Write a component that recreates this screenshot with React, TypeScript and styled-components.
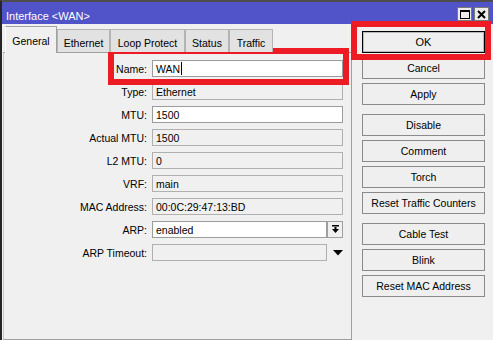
import { Fragment } from "react";
import styled, { createGlobalStyle } from "styled-components";

const Global = createGlobalStyle`
  html, body {
    margin: 0;
    padding: 0;
    background: #f0f0f0;
    overflow: hidden;
  }
  body {
    font-family: "Liberation Sans", Arial, sans-serif;
    font-size: 10.5px;
    color: #000;
  }
`;

const Shell = styled.div`
  position: relative;
  width: 493px;
  height: 340px;
  overflow: hidden;
`;

const Window = styled.div`
  width: 493px;
  height: 340px;
  box-sizing: border-box;
  border-top: 2px solid #4d4d4d;
  border-left: 2px solid #262626;
  background: #f0f0f0;
  display: flex;
  flex-direction: column;
`;

const TitleBar = styled.div`
  height: 22px;
  flex: 0 0 22px;
  background: #5153c9;
  display: flex;
  align-items: flex-start;
  padding: 0 4px;
  color: #fff;
`;

const Title = styled.div`
  font-size: 11px;
  line-height: 13px;
  margin-top: 8px;
  flex: 1;
`;

const TitleButtons = styled.div`
  display: flex;
  gap: 2px;
  margin-top: 5px;
`;

const TitleButton = styled.div`
  width: 15px;
  height: 14px;
  box-sizing: border-box;
  background: #ececec;
  border: 1px solid #7a7a7a;
  display: flex;
  align-items: center;
  justify-content: center;
`;

const Body = styled.div`
  flex: 1;
  display: flex;
  min-height: 0;
`;

const LeftPane = styled.div`
  width: 350px;
  flex: 0 0 350px;
  box-sizing: border-box;
  padding: 2px 0 0 1px;
  display: flex;
  flex-direction: column;
`;

const TabStrip = styled.div`
  position: relative;
  z-index: 1;
  height: 27px;
  margin-bottom: -1px;
  padding-left: 2px;
  display: flex;
  align-items: flex-end;
`;

const Tab = styled.div<{ $active?: boolean; $w: number }>`
  width: ${(p) => p.$w}px;
  box-sizing: border-box;
  height: ${(p) => (p.$active ? 27 : 23)}px;
  margin-bottom: ${(p) => (p.$active ? 0 : 1)}px;
  padding-top: ${(p) => (p.$active ? 8 : 7)}px;
  background: ${(p) => (p.$active ? "#f0f0f0" : "#e2e2e2")};
  border: 1px solid ${(p) => (p.$active ? "#a0a0a0" : "#b4b4b4")};
  border-bottom: none;
  border-left-color: ${(p) => (p.$active ? "#ffffff" : "#b4b4b4")};
  display: flex;
  justify-content: center;
  line-height: 12px;
  white-space: nowrap;
`;

const Panel = styled.div`
  flex: 1;
  box-sizing: border-box;
  border: 1px solid #a0a0a0;
  border-left-color: #c8c8c8;
  background: #f0f0f0;
  padding: 7px 0 0 0;
`;

const Form = styled.div`
  display: grid;
  grid-template-columns: 143px 191px;
  grid-auto-rows: 17px;
  column-gap: 5px;
  row-gap: 6px;
`;

const Label = styled.div`
  text-align: right;
  align-self: center;
  white-space: nowrap;
  line-height: 12px;
`;

const Field = styled.div<{ $editable?: boolean; $w?: number }>`
  box-sizing: border-box;
  height: 17px;
  width: ${(p) => (p.$w ? `${p.$w}px` : "100%")};
  flex: 0 0 auto;
  border: 1px solid ${(p) => (p.$editable ? "#9c9c9c" : "#b0b0b0")};
  background: ${(p) => (p.$editable ? "#ffffff" : "#f0f0f0")};
  padding-left: 3px;
  display: flex;
  align-items: center;
  line-height: 12px;
  white-space: nowrap;
`;

const Caret = styled.span`
  display: inline-block;
  width: 1px;
  height: 13px;
  background: #000;
  margin-left: 1px;
`;

const FieldGroup = styled.div`
  display: flex;
  align-items: center;
`;

const DropButton = styled.div`
  width: 16px;
  height: 17px;
  box-sizing: border-box;
  border: 1px solid #a0a0a0;
  background: #f0f0f0;
  display: flex;
  align-items: center;
  justify-content: center;
`;

const DropArrow = styled.div`
  width: 16px;
  height: 17px;
  display: flex;
  align-items: center;
  justify-content: center;
  padding-left: 6px;
  box-sizing: border-box;
`;

const RightPane = styled.div`
  flex: 1;
  padding: 7px 0 0 10px;
  display: flex;
  flex-direction: column;
  gap: 4px;
`;

const Button = styled.div<{ $default?: boolean; $spaced?: boolean }>`
  width: 123px;
  height: 22px;
  box-sizing: border-box;
  margin-top: ${(p) => (p.$spaced ? 5 : 0)}px;
  border: 1px solid ${(p) => (p.$default ? "#000000" : "#8a8a8a")};
  box-shadow: ${(p) => (p.$default ? "inset 0 0 0 1px #b9b9b9" : "none")};
  background: #efefef;
  display: flex;
  align-items: center;
  justify-content: center;
  font-size: ${(p) => (p.$default ? 11 : 10.5)}px;
  line-height: 12px;
  white-space: nowrap;
`;

const Highlight = styled.div<{ $x: number; $y: number; $w: number; $h: number }>`
  position: absolute;
  left: ${(p) => p.$x}px;
  top: ${(p) => p.$y}px;
  width: ${(p) => p.$w}px;
  height: ${(p) => p.$h}px;
  box-sizing: border-box;
  border: 6px solid #ed1c24;
  pointer-events: none;
`;

const tabs = [
  { name: "General", w: 52, active: true },
  { name: "Ethernet", w: 53 },
  { name: "Loop Protect", w: 75 },
  { name: "Status", w: 44 },
  { name: "Traffic", w: 44 },
];

const fields = [
  { label: "Type:", value: "Ethernet" },
  { label: "MTU:", value: "1500", editable: true },
  { label: "Actual MTU:", value: "1500" },
  { label: "L2 MTU:", value: "0" },
  { label: "VRF:", value: "main" },
  { label: "MAC Address:", value: "00:0C:29:47:13:BD" },
];

const buttons = [
  { text: "OK", isDefault: true },
  { text: "Cancel" },
  { text: "Apply" },
  { text: "Disable", spaced: true },
  { text: "Comment" },
  { text: "Torch" },
  { text: "Reset Traffic Counters" },
  { text: "Cable Test", spaced: true },
  { text: "Blink" },
  { text: "Reset MAC Address" },
];

export default function App() {
  return (
    <Shell>
      <Global />
      <Window>
        <TitleBar>
          <Title>Interface &lt;WAN&gt;</Title>
          <TitleButtons>
            <TitleButton>
              <svg width="10" height="9" viewBox="0 0 10 9">
                <rect x="0.5" y="0.5" width="9" height="8" fill="none" stroke="#000" />
                <rect x="0" y="0" width="10" height="2" fill="#000" />
              </svg>
            </TitleButton>
            <TitleButton>
              <svg width="9" height="9" viewBox="0 0 9 9">
                <path d="M1 1 L8 8 M8 1 L1 8" stroke="#000" strokeWidth="2" />
              </svg>
            </TitleButton>
          </TitleButtons>
        </TitleBar>
        <Body>
          <LeftPane>
            <TabStrip>
              {tabs.map((t) => (
                <Tab key={t.name} $active={t.active} $w={t.w}>
                  {t.name}
                </Tab>
              ))}
            </TabStrip>
            <Panel>
              <Form>
                <Label>Name:</Label>
                <Field $editable>
                  WAN
                  <Caret />
                </Field>
                {fields.map((f) => (
                  <Fragment key={f.label}>
                    <Label>{f.label}</Label>
                    <Field $editable={f.editable}>{f.value}</Field>
                  </Fragment>
                ))}
                <Label>ARP:</Label>
                <FieldGroup>
                  <Field $editable $w={175}>
                    enabled
                  </Field>
                  <DropButton>
                    <svg width="9" height="9" viewBox="0 0 9 9">
                      <rect x="1" y="0" width="7" height="1.5" fill="#000" />
                      <rect x="3.5" y="2" width="2" height="3" fill="#000" />
                      <polygon points="1,4 8,4 4.5,8" fill="#000" />
                    </svg>
                  </DropButton>
                </FieldGroup>
                <Label>ARP Timeout:</Label>
                <FieldGroup>
                  <Field $w={175} />
                  <DropArrow>
                    <svg width="10" height="6" viewBox="0 0 10 6">
                      <polygon points="0,0 10,0 5,5.5" fill="#000" />
                    </svg>
                  </DropArrow>
                </FieldGroup>
              </Form>
            </Panel>
          </LeftPane>
          <RightPane>
            {buttons.map((b) => (
              <Button key={b.text} $default={b.isDefault} $spaced={b.spaced}>
                {b.text}
              </Button>
            ))}
          </RightPane>
        </Body>
      </Window>
      <Highlight $x={108} $y={48} $w={241} $h={37} />
      <Highlight $x={351} $y={21} $w={140} $h={39} />
    </Shell>
  );
}
